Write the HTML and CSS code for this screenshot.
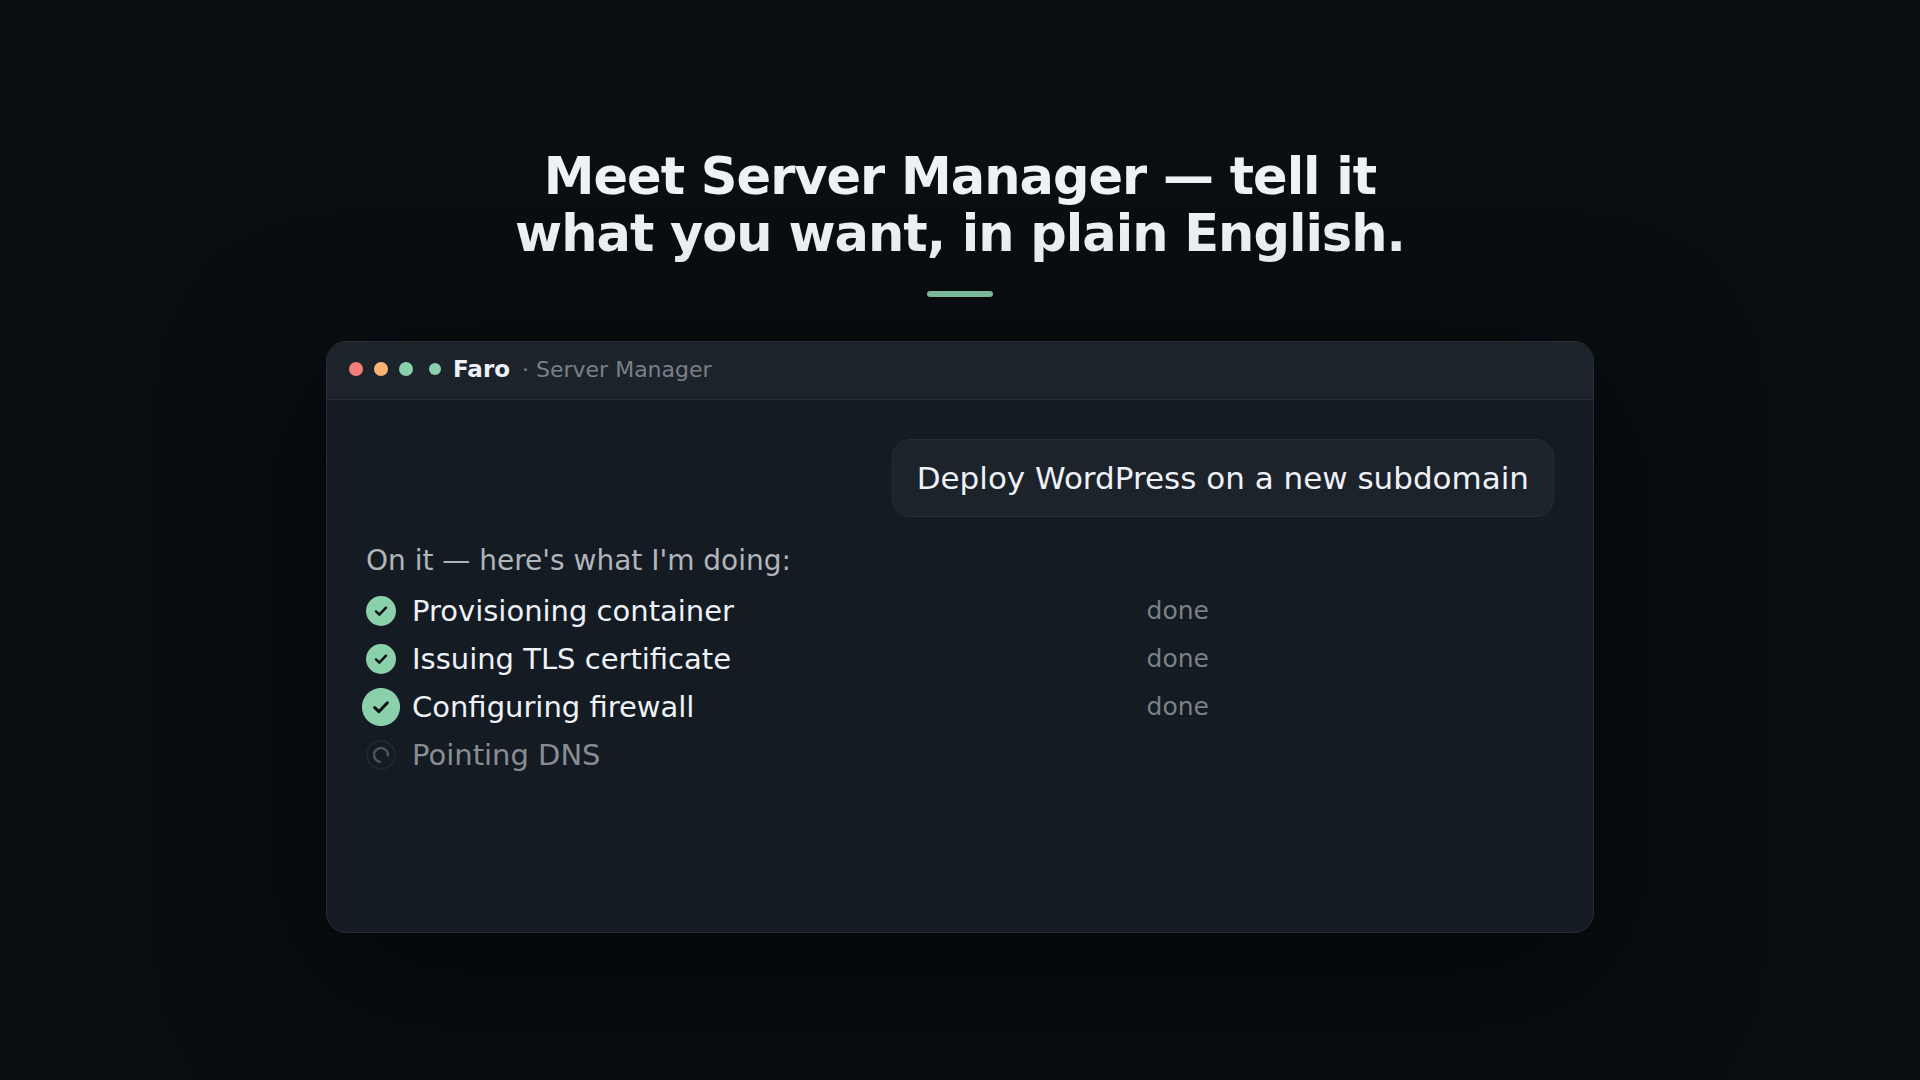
FILE: index.html
```
<!DOCTYPE html>
<html lang="en">
<head>
  <meta charset="utf-8">
  <title>Faro - Server Manager</title>
  <link rel="stylesheet" href="styles.css">
</head>
<body>
  <main class="scene">
    <h1 class="headline">Meet Server Manager — tell it<br>what you want, in plain English.</h1>
    <div class="accent"></div>

    <section class="window">
      <header class="titlebar">
        <span class="light red"></span>
        <span class="light orange"></span>
        <span class="light green"></span>
        <span class="status"></span>
        <strong class="app">Faro</strong>
        <span class="section">· Server Manager</span>
      </header>

      <div class="chat">
        <p class="bubble">Deploy WordPress on a new subdomain</p>
        <p class="reply">On it — here's what I'm doing:</p>

        <ul class="steps">
          <li class="step">
            <svg class="icon" viewBox="0 0 30 30">
              <circle cx="15" cy="15" r="15" fill="#8ad0aa"/>
              <path d="M10 15.4l3.3 3.3 6.7-7" fill="none" stroke="#0a1014" stroke-width="2.4" stroke-linecap="round" stroke-linejoin="round"/>
            </svg>
            <span class="name">Provisioning container</span>
            <span class="state">done</span>
          </li>
          <li class="step">
            <svg class="icon" viewBox="0 0 30 30">
              <circle cx="15" cy="15" r="15" fill="#8ad0aa"/>
              <path d="M10 15.4l3.3 3.3 6.7-7" fill="none" stroke="#0a1014" stroke-width="2.4" stroke-linecap="round" stroke-linejoin="round"/>
            </svg>
            <span class="name">Issuing TLS certificate</span>
            <span class="state">done</span>
          </li>
          <li class="step">
            <svg class="icon pop" viewBox="0 0 30 30">
              <circle cx="15" cy="15" r="15" fill="#8ad0aa"/>
              <path d="M10 15.4l3.3 3.3 6.7-7" fill="none" stroke="#0a1014" stroke-width="2.4" stroke-linecap="round" stroke-linejoin="round"/>
            </svg>
            <span class="name">Configuring firewall</span>
            <span class="state">done</span>
          </li>
          <li class="step pending">
            <svg class="icon" viewBox="0 0 30 30" fill="none">
              <circle cx="15" cy="15" r="14" stroke="#20272f" stroke-width="2"/>
              <path d="M22 15.5A7 7 0 1 0 14 21.9" stroke="#4d545c" stroke-width="2.4" stroke-linecap="round"/>
            </svg>
            <span class="name">Pointing DNS</span>
          </li>
        </ul>
      </div>
    </section>
  </main>
</body>
</html>
```
FILE: styles.css
```
* {
  box-sizing: border-box;
}

body {
  margin: 0;
  background-color: #090e12;
  color: #eef1f6;
  font-family: "DejaVu Sans", sans-serif;
}

.scene {
  min-height: 100vh;
  padding: 0 24px;
  display: flex;
  flex-direction: column;
  justify-content: center;
  align-items: center;
}

.headline {
  margin: 0;
  font-size: 51px;
  line-height: 57px;
  letter-spacing: -1px;
  text-align: center;
}

.accent {
  width: 66px;
  height: 6px;
  margin: 29px 0 44px;
  border-radius: 3px;
  background-color: #84c9a4;
}

.window {
  width: 100%;
  max-width: 1268px;
  min-height: 592px;
  border: 1px solid #272e36;
  border-radius: 20px;
  background-color: #151b23;
  box-shadow: 0 40px 150px rgba(0, 0, 0, 0.7);
  overflow: hidden;
}

.titlebar {
  height: 58px;
  padding: 0 22px 2px;
  display: flex;
  align-items: center;
  background-color: #1c232b;
  border-bottom: 1px solid #272e36;
  font-size: 22px;
}

.light {
  width: 14px;
  height: 14px;
  margin-right: 11px;
  border-radius: 50%;
}

.red {
  background-color: #f37d79;
}

.orange {
  background-color: #fbb273;
}

.green {
  background-color: #8ad0aa;
}

.status {
  width: 12px;
  height: 12px;
  margin: 0 12px 0 5px;
  border-radius: 50%;
  background-color: #8ad0aa;
}

.app {
  margin-right: 12px;
  font-size: 23px;
}

.section {
  color: #7b8087;
}

.chat {
  padding: 39px;
  display: flex;
  flex-direction: column;
}

.bubble {
  margin: 0;
  padding: 17px 24px;
  align-self: flex-end;
  border: 1px solid #272e36;
  border-radius: 18px;
  background-color: #1c232b;
  font-size: 31px;
  line-height: 42px;
}

.reply {
  margin: 25px 0 7px;
  color: #b1b5bb;
  font-size: 28px;
  line-height: 38px;
}

.steps {
  width: 100%;
  max-width: 843px;
  margin: 0;
  padding: 0;
  list-style: none;
}

.step {
  height: 48px;
  display: flex;
  align-items: center;
  gap: 16px;
}

.icon {
  width: 30px;
  height: 30px;
  flex: none;
}

/* just finished, still bouncing */
.pop {
  transform: scale(1.27);
}

.name {
  flex: 1;
  font-size: 29px;
}

.pending .name {
  color: #888d93;
}

.state {
  color: #7b8087;
  font-size: 25px;
}
```
